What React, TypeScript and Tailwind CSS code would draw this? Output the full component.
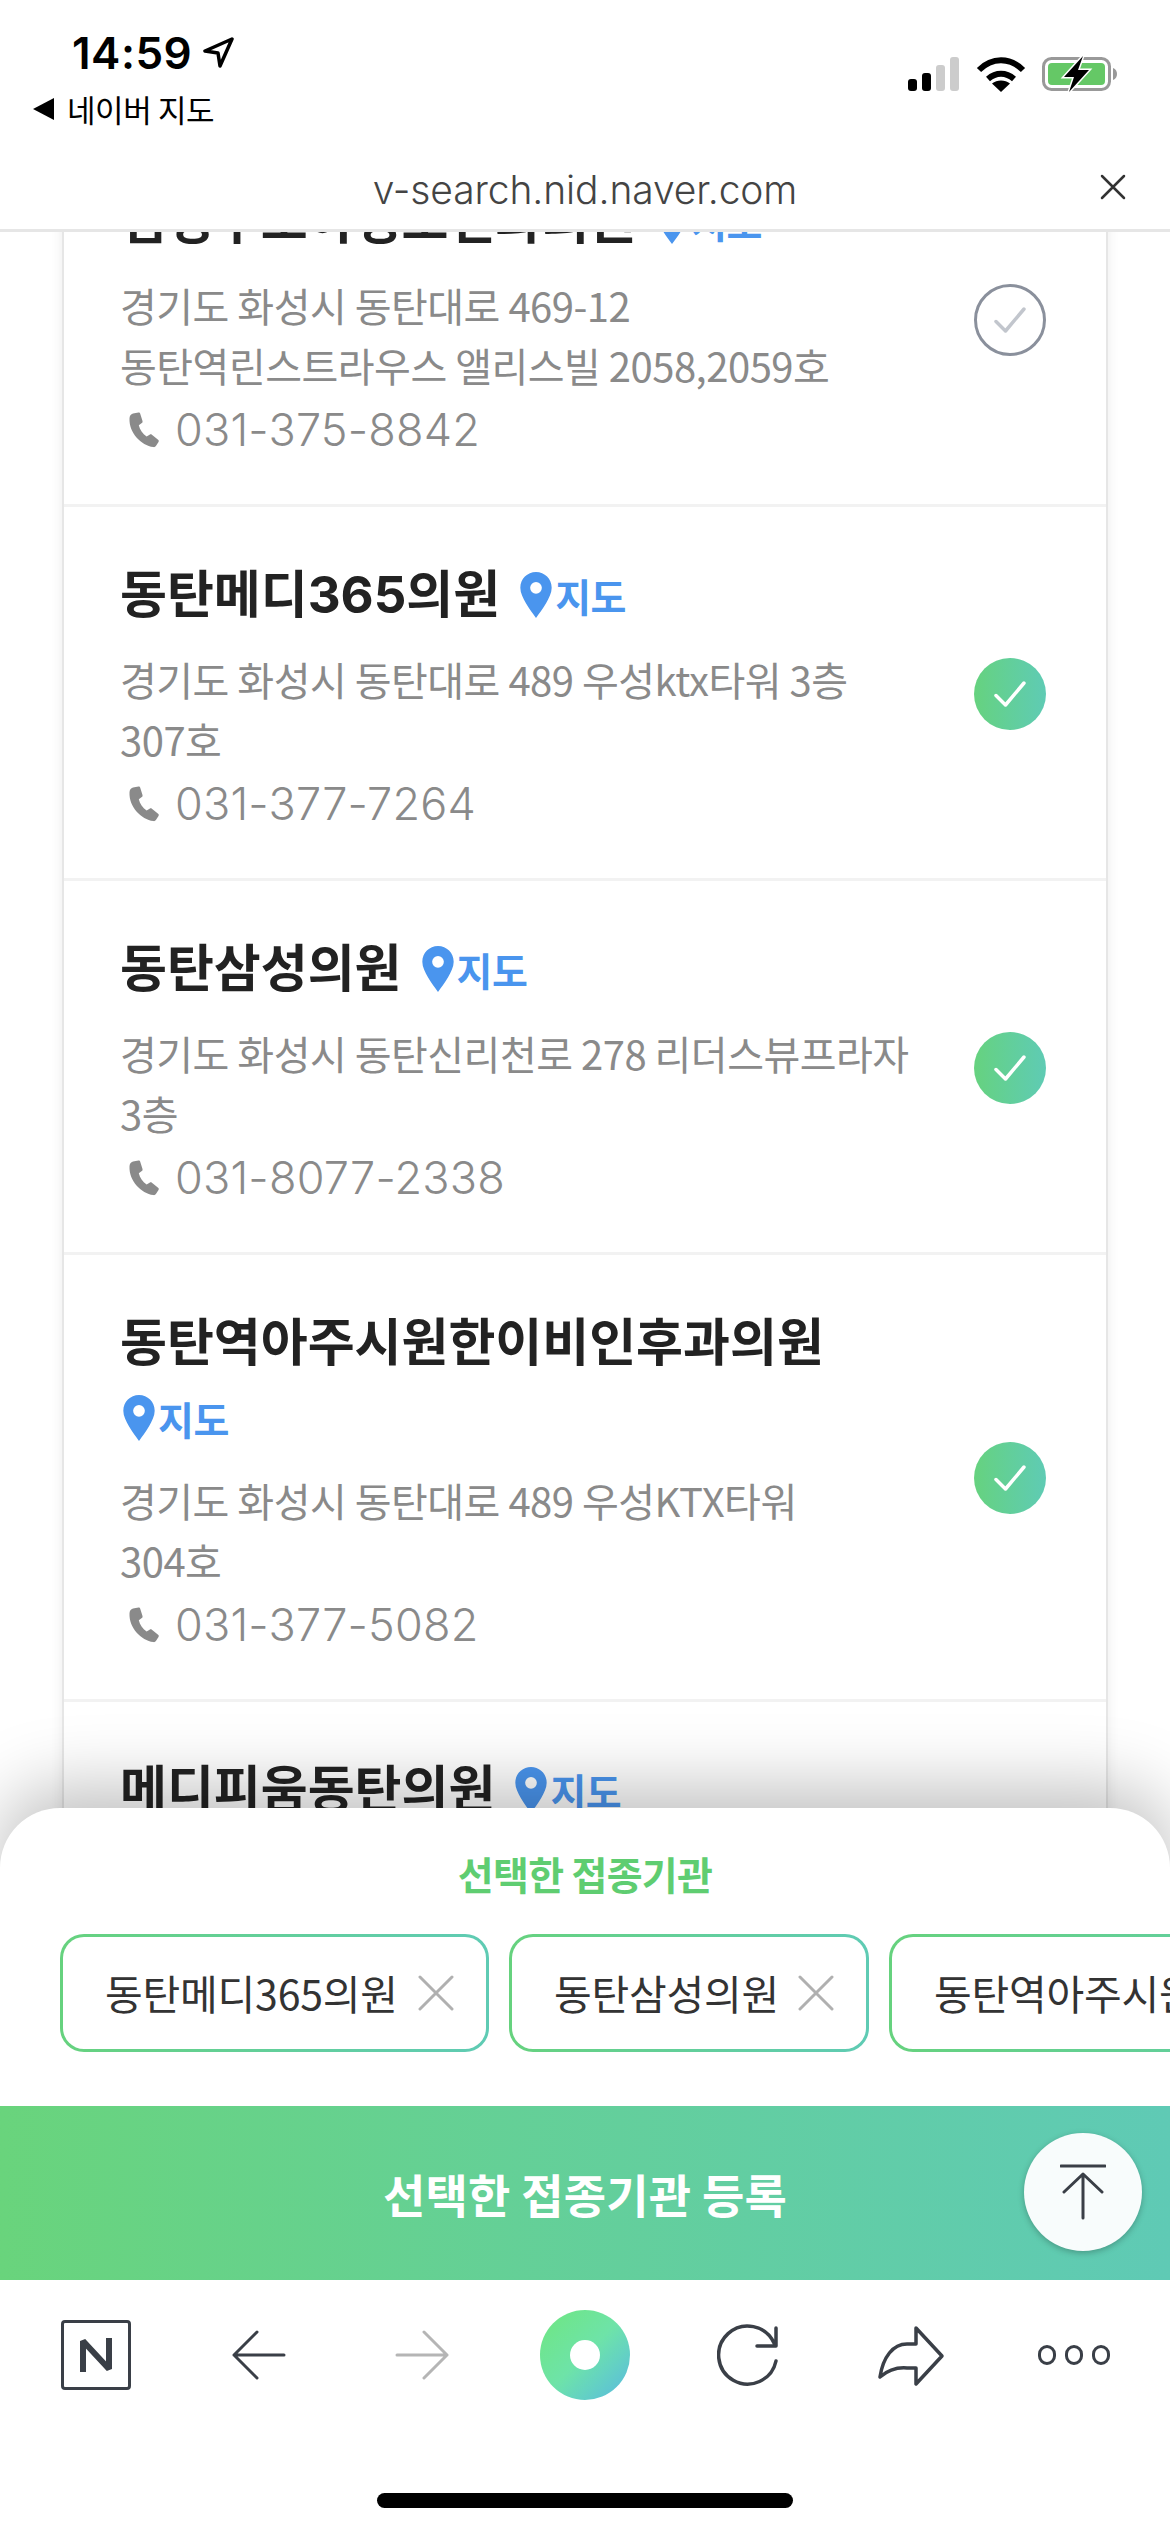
import React from "react";

const KR = "font-['Noto_Sans_CJK_KR','Noto_Sans',sans-serif]";
const TITLE = "font-['Inter','Noto_Sans_CJK_KR',sans-serif] text-[51px] font-bold leading-[60px] tracking-[0px] text-[#222]";

function Pin({ className = "" }: { className?: string }) {
  return (
    <svg viewBox="0 0 30 44" className={className}>
      <path fillRule="evenodd" fill="#4a95ee" d="M15 0C6.7 0 0 6.6 0 15c0 5 2.600 10 5.500 15.200C8.300 35 12 40 15 44c3-4 6.700-9 9.500-13.800C27.400 25 30 20 30 15 30 6.600 23.300 0 15 0Zm0 9.500a5.600 5.600 0 1 1 0 11.200 5.600 5.600 0 0 1 0-11.200Z" />
    </svg>
  );
}

function Phone() {
  return (
    <svg viewBox="0 0 34 36" className="h-[36px] w-[34px] shrink-0">
      <path fill="#8a8a8a" d="M6 1.500 11.500.500c1 0 1.500.5 1.800 1.400l2.200 7c.2.900 0 1.600-.7 2.100l-3 2.200c1 4.300 3.800 8.500 7.800 11.300l3-1.800c.8-.5 1.600-.4 2.300.1l6.200 5c.8.600.9 1.400.4 2.200l-2.600 4c-.6.900-1.500 1.300-2.500 1.100C14 33.400 1.800 20.500 2.500 6.500c0-2.500 1.300-4.300 3.500-5Z" />
    </svg>
  );
}

function Check({ on }: { on: boolean }) {
  if (on) {
    return (
      <div className="mb-[12px] flex h-[72px] w-[72px] items-center justify-center rounded-full bg-gradient-to-r from-[#66d27e] to-[#5fcbb4]">
        <svg viewBox="0 0 32 28" className="h-[28px] w-[32px]" fill="none" stroke="#fff" strokeWidth="3.500" strokeLinecap="round" strokeLinejoin="round">
          <path d="M2 15.500 11.500 25 30 3" />
        </svg>
      </div>
    );
  }
  return (
    <div className="mb-[12px] flex h-[72px] w-[72px] items-center justify-center rounded-full border-[3px] border-[#8a909c] bg-white">
      <svg viewBox="0 0 32 28" className="h-[28px] w-[32px]" fill="none" stroke="#c2c6cd" strokeWidth="3.500" strokeLinecap="round" strokeLinejoin="round">
        <path d="M2 15.500 11.500 25 30 3" />
      </svg>
    </div>
  );
}

function MapLink({ className = "" }: { className?: string }) {
  return (
    <span className={`inline-flex items-center gap-[3px] align-middle ${className}`}>
      <Pin className="h-[46px] w-[32px]" />
      <span className="text-[39px] font-semibold leading-[46px] tracking-[-0.5px] text-[#4a95ee]">지도</span>
    </span>
  );
}

type Row = { name: string; wrapMap?: boolean; lines: string[]; phone: string };

const rows: Row[] = [
  { name: "동탄메디365의원", lines: ["경기도 화성시 동탄대로 489 우성ktx타워 3층", "307호"], phone: "031-377-7264" },
  { name: "동탄삼성의원", lines: ["경기도 화성시 동탄신리천로 278 리더스뷰프라자", "3층"], phone: "031-8077-2338" },
  { name: "동탄역아주시원한이비인후과의원", wrapMap: true, lines: ["경기도 화성시 동탄대로 489 우성KTX타워", "304호"], phone: "031-377-5082" },
];

function Address({ lines, phone }: { lines: string[]; phone: string }) {
  return (
    <>
      <div className="mt-[24px] text-[40px] leading-[60px] tracking-[-0.5px] text-[#8a8a8a]">
        {lines.map((l) => (
          <div key={l} className="whitespace-nowrap">{l}</div>
        ))}
      </div>
      <div className="mt-[5px] flex h-[60px] items-center gap-[14px] pl-[7px] text-[45px] tracking-[0.2px] text-[#8a8a8a]">
        <Phone />
        <span className="font-['Inter',sans-serif] font-light">{phone}</span>
      </div>
    </>
  );
}

function Item({ row, on }: { row: Row; on: boolean }) {
  return (
    <div className="flex items-center justify-between border-b-[3px] border-[#f2f2f2] pl-[56px] pr-[60px] pt-[58px] pb-[44px]">
      <div>
        <div className="flex h-[60px] items-center gap-[20px] whitespace-nowrap">
          <span className={TITLE}>{row.name}</span>
          {!row.wrapMap && <MapLink />}
        </div>
        {row.wrapMap && <MapLink className="mt-[22px] mb-[5px] ml-[3px] flex" />}
        <Address lines={row.lines} phone={row.phone} />
      </div>
      <Check on={on} />
    </div>
  );
}

function Chip({ text, width, x = true }: { text: string; width: string; x?: boolean }) {
  return (
    <div className={`h-[118px] shrink-0 rounded-[24px] bg-gradient-to-r from-[#66d27e] to-[#5fcbb4] p-[3px] ${width}`}>
      <div className="flex h-full items-center justify-between rounded-[21px] bg-white pl-[42px] pr-[32px]">
        <span className="whitespace-nowrap text-[41px] tracking-[-0.2px] text-[#333]">{text}</span>
        {x && (
          <svg viewBox="0 0 36 36" className="h-[36px] w-[36px] shrink-0" stroke="#b0b0b0" strokeWidth="3" strokeLinecap="round">
            <path d="M2 2 34 34M34 2 2 34" />
          </svg>
        )}
      </div>
    </div>
  );
}

const stroke = "#3a3f47";

function Dot() {
  return <div className="h-[20px] w-[18px] rounded-full border-[3px] border-[#3a3f47]" />;
}

function Toolbar() {
  return (
    <div className="grid h-[150px] grid-cols-7 px-[15px] pt-[30px]">
      <div className="flex items-start justify-center pt-[10px]">
        <div className="flex h-[70px] w-[70px] items-center justify-center rounded-[4px] border-[3px] border-[#3a3f47]">
          <svg viewBox="0 0 32 34" className="h-[34px] w-[32px]" fill="none" stroke={stroke} strokeWidth="6" strokeLinejoin="bevel">
            <path d="M3 34V3l26 28V0" />
          </svg>
        </div>
      </div>
      <div className="flex items-start justify-center pt-[20px]">
        <svg viewBox="0 0 54 50" className="h-[50px] w-[54px]" fill="none" stroke={stroke} strokeWidth="3" strokeLinecap="round" strokeLinejoin="round">
          <path d="M25 2 2 25l23 23M2 25h50" />
        </svg>
      </div>
      <div className="flex items-start justify-center pt-[20px]">
        <svg viewBox="0 0 54 50" className="h-[50px] w-[54px]" fill="none" stroke="#b5b5b5" strokeWidth="3" strokeLinecap="round" strokeLinejoin="round">
          <path d="M29 2l23 23-23 23M52 25H2" />
        </svg>
      </div>
      <div className="flex items-start justify-center">
        <div className="flex h-[90px] w-[90px] items-center justify-center rounded-full bg-gradient-to-br from-[#6fe67e] via-[#6ee3a8] to-[#5ab8e0]">
          <div className="h-[30px] w-[30px] rounded-full bg-white" />
        </div>
      </div>
      <div className="flex items-start justify-center pt-[14px]">
        <svg viewBox="0 0 62 62" className="h-[62px] w-[62px]" fill="none" stroke={stroke} strokeWidth="3.500" strokeLinecap="round" strokeLinejoin="round">
          <path d="M59 37A29 29 0 1 1 57 19M59 4v18H40" />
        </svg>
      </div>
      <div className="flex items-start justify-center pt-[15px]">
        <svg viewBox="0 0 68 62" className="h-[62px] w-[68px]" fill="none" stroke={stroke} strokeWidth="3.500" strokeLinecap="round" strokeLinejoin="round">
          <path d="M39 3 65 31 39 59V43H30C18 42 10 46 3 52 6 32 16 19 30 19h9Z" />
        </svg>
      </div>
      <div className="flex items-start justify-center gap-[9px] pt-[35px]">
        <Dot />
        <Dot />
        <Dot />
      </div>
    </div>
  );
}

export default function App() {
  return (
    <div className={`relative flex h-[2532px] w-[1170px] flex-col overflow-hidden bg-white ${KR}`}>
      {/* status bar + url */}
      <header className="relative z-20 h-[232px] shrink-0 border-b-[3px] border-[#e6e6e6] bg-white">
        <div className="flex h-[165px] items-start justify-between pl-[32px] pr-[52px] pt-[30px]">
          <div>
            <div className="flex items-center gap-[10px] pl-[40px]">
              <span className="font-['Inter',sans-serif] text-[44px] font-semibold leading-[46px] tracking-[0.5px] text-black">14:59</span>
              <svg viewBox="0 0 32 32" className="h-[32px] w-[32px]" fill="none" stroke="#000" strokeWidth="3.500" strokeLinejoin="round">
                <path d="M30 2 3 14l13 2 2 13L30 2Z" />
              </svg>
            </div>
            <div className="mt-[15px] flex items-center gap-[11px]">
              <svg viewBox="0 0 24 24" className="h-[24px] w-[24px]"><path fill="#000" d="M22 1v22L1 12Z" /></svg>
              <span className="text-[31px] leading-[36px] tracking-[-0.4px] text-black">네이버 지도</span>
            </div>
          </div>
          <div className="flex items-center gap-[16px] pt-[25px]">
            <svg viewBox="0 0 52 34" className="h-[34px] w-[52px]">
              <rect x="0" y="22" width="9" height="12" rx="3" fill="#000" />
              <rect x="14" y="16" width="9" height="18" rx="3" fill="#000" />
              <rect x="28" y="8" width="9" height="26" rx="3" fill="#ccc" />
              <rect x="42" y="0" width="9" height="34" rx="3" fill="#ccc" />
            </svg>
            <svg viewBox="0 0 50 36" className="h-[36px] w-[50px]" fill="none" stroke="#000">
              <path strokeWidth="6" d="M3 14C16 1 34 1 47 14" />
              <path strokeWidth="6" d="M12 23c8-7 18-7 26 0" />
              <path fill="#000" stroke="none" d="M16 27.500c5-4 13-4 18 0l-9 8.500Z" />
            </svg>
            <svg viewBox="0 0 76 38" className="h-[38px] w-[76px]">
              <rect x="1.500" y="3.500" width="66" height="31" rx="8" fill="none" stroke="#999" strokeWidth="3" />
              <rect x="6" y="8" width="57" height="22" rx="4" fill="#65c866" />
              <path fill="#999" d="M71 13c3 1 4 3.500 4 6s-1 5-4 6Z" />
              <path fill="#000" stroke="#fff" strokeWidth="3" paintOrder="stroke" d="M41 1 22 22h10l-5 15 20-22H36Z" />
            </svg>
          </div>
        </div>
        <div className="relative text-center">
          <span className="font-['Inter',sans-serif] text-[39px] font-light leading-[50px] tracking-[-0.1px] text-[#444]">v-search.nid.naver.com</span>
          <svg viewBox="0 0 26 26" className="absolute right-[44px] top-[9px] h-[26px] w-[26px]" stroke="#333" strokeWidth="2.500" strokeLinecap="round">
            <path d="M2 2 24 24M24 2 2 24" />
          </svg>
        </div>
      </header>

      {/* list */}
      <main className="min-h-0 flex-1 overflow-hidden">
        <div className="mx-[62px] mt-[-99px] border-x-2 border-[#e6e6e6] shadow-[0_0_12px_rgba(0,0,0,0.08)]">
          <Item on={false} row={{ name: "김성우소아청소년과의원", lines: ["경기도 화성시 동탄대로 469-12", "동탄역린스트라우스 앨리스빌 2058,2059호"], phone: "031-375-8842" }} />
          {rows.map((r) => (
            <Item key={r.name} row={r} on />
          ))}
          <div className="pl-[56px] pt-[58px] pb-[44px]">
            <div className="flex h-[60px] items-center gap-[20px] whitespace-nowrap">
              <span className={TITLE}>메디피움동탄의원</span>
              <MapLink />
            </div>
          </div>
        </div>
      </main>

      {/* bottom sheet */}
      <section className="absolute inset-x-0 bottom-0 z-10 h-[724px] rounded-t-[60px] bg-white shadow-[0_-20px_70px_rgba(0,0,0,0.25)]">
        <h2 className="pt-[38px] text-center text-[39px] font-bold leading-[54px] tracking-[-0.7px] text-[#5fcd71]">선택한 접종기관</h2>
        <div className="mt-[34px] flex gap-[20px] overflow-hidden pl-[60px]">
          <Chip text="동탄메디365의원" width="w-[429px]" />
          <Chip text="동탄삼성의원" width="w-[360px]" />
          <Chip text="동탄역아주시원한이비인후과의원" width="w-[600px]" x={false} />
        </div>
        <div className="relative mt-[54px] flex h-[174px] items-center justify-center bg-gradient-to-r from-[#69d47c] to-[#5fcab5]">
          <span className="text-[46px] font-bold tracking-[0.2px] text-white">선택한 접종기관 등록</span>
          <button className="absolute left-[1024px] top-[27px] flex h-[118px] w-[118px] items-center justify-center rounded-full bg-[#f8fcfc] shadow-[0_2px_6px_rgba(0,0,0,0.25)]">
            <svg viewBox="0 0 46 56" className="h-[56px] w-[46px]" fill="none" stroke={stroke} strokeWidth="3" strokeLinecap="round" strokeLinejoin="round">
              <path d="M1 2h44M23 10v44M4 28 23 10l19 18" />
            </svg>
          </button>
        </div>
        <Toolbar />
        <div className="mt-[63px] flex justify-center">
          <div className="h-[15px] w-[416px] rounded-full bg-black" />
        </div>
      </section>
    </div>
  );
}
